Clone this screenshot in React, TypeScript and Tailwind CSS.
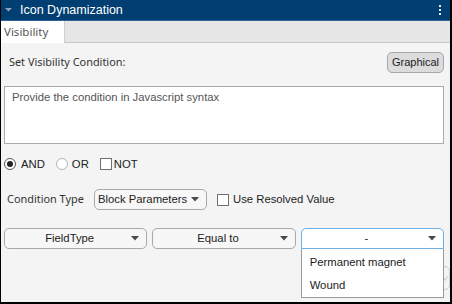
import React from 'react';

const arial = { fontFamily: '"Liberation Sans", Arial, sans-serif' };
const segoe = { fontFamily: '"Noto Sans", "Open Sans", sans-serif' };

const Caret = ({ color = '#4a4a4a' }: { color?: string }) => (
  <svg width="8" height="5" viewBox="0 0 8 5" className="shrink-0">
    <polygon points="0,0 8,0 4,4.5" fill={color} />
  </svg>
);

type DropdownProps = {
  label: string;
  center?: boolean;
  focused?: boolean;
  className?: string;
};

const Dropdown: React.FC<DropdownProps> = ({ label, center, focused, className = '' }) => (
  <div
    className={`flex items-center h-[21px] pl-[3px] pr-[7px] border text-[11.3px] text-[#222] ${
      focused
        ? 'bg-white border-[#6aaee6] rounded-t-[5px]'
        : 'bg-[#f7f7f7] border-[#a9a9a9] rounded-[5px]'
    } ${className}`}
    style={arial}
  >
    <span className={`flex-1 truncate ${center ? 'text-center' : ''}`}>{label}</span>
    <Caret />
  </div>
);

const Radio = ({ checked }: { checked?: boolean }) => (
  <span
    className={`block w-[12px] h-[12px] rounded-full border bg-white flex items-center justify-center ${
      checked ? 'border-[#555]' : 'border-[#b5b5b5]'
    }`}
  >
    {checked && <span className="w-[6px] h-[6px] rounded-full bg-[#222]" />}
  </span>
);

const Checkbox = () => <span className="block w-[12px] h-[12px] border border-[#707070] bg-white" />;

export default function App() {
  return (
    <div className="w-[452px] h-[304px] flex flex-col bg-[#f4f4f4] border-l border-r-2 border-b-2 border-black overflow-hidden">
      {/* title bar */}
      <div className="h-[21px] shrink-0 flex items-center bg-[#013f72] border-b border-[#2a6499] pl-[4px] pr-[9px]">
        <svg width="7" height="4" viewBox="0 0 7 4">
          <polygon points="0,0 7,0 3.5,3.5" fill="#8fa4ba" />
        </svg>
        <span className="ml-[8px] text-white text-[12.5px]" style={arial}>
          Icon Dynamization
        </span>
        <div className="ml-auto flex flex-col gap-[2px]">
          <span className="w-[2px] h-[2px] bg-[#e6ecf2]" />
          <span className="w-[2px] h-[2px] bg-[#e6ecf2]" />
          <span className="w-[2px] h-[2px] bg-[#e6ecf2]" />
        </div>
      </div>

      {/* tabs */}
      <div className="h-[22px] shrink-0 flex bg-[#e6e6e6] border-b border-[#c6c6c6]">
        <div className="w-[64px] h-[22px] bg-white border-r border-[#cfcfcf] pl-[3px] flex items-center text-[11.5px] text-[#555]" style={segoe}>
          Visibility
        </div>
      </div>

      {/* body */}
      <div className="flex flex-col pl-[3px] pr-[6px]">
        <div className="mt-[9px] h-[21px] flex items-center">
          <span className="ml-[5px] text-[10.9px] text-[#333]" style={segoe}>
            Set Visibility Condition:
          </span>
          <button
            className="ml-auto h-[21px] w-[57px] rounded-[5px] bg-[#dcdcdc] border border-[#a8a8a8] text-[11px] text-[#222]"
            style={arial}
          >
            Graphical
          </button>
        </div>

        <div className="mt-[13px] h-[58px] bg-white border border-[#aaaaaa] px-[7px] pt-[2px] text-[11.3px] text-[#555]" style={arial}>
          Provide the condition in Javascript syntax
        </div>

        <div className="mt-[10px] h-[20px] flex items-center text-[11.3px] text-[#222]" style={arial}>
          <Radio checked />
          <span className="ml-[5px]">AND</span>
          <span className="ml-[11px]"><Radio /></span>
          <span className="ml-[4px]">OR</span>
          <span className="ml-[11px]"><Checkbox /></span>
          <span className="ml-[2px]">NOT</span>
        </div>

        <div className="mt-[15px] h-[21px] flex items-center">
          <span className="ml-[3px] w-[87px] text-[10.9px] text-[#333]" style={segoe}>
            Condition Type
          </span>
          <Dropdown label="Block Parameters" className="w-[113px]" />
          <span className="ml-[10px]"><Checkbox /></span>
          <span className="ml-[4px] text-[11.3px] text-[#222]" style={arial}>
            Use Resolved Value
          </span>
        </div>

        <div className="mt-[18px] grid grid-cols-3 gap-[5px] w-[440px]">
          <Dropdown label="FieldType" center />
          <Dropdown label="Equal to" center />
          <div className="relative">
            <Dropdown label="-" center focused />
            <div className="absolute left-0 right-0 top-full z-10 h-[49px] bg-white border border-t-0 border-[#9a9a9a] pl-[8px] text-[11.3px] text-[#222] flex flex-col" style={arial}>
              <span className="h-[24px] flex items-center pt-[2px]">Permanent magnet</span>
              <span className="h-[24px] flex items-center">Wound</span>
            </div>
          </div>
        </div>

        <div className="mt-[17px] h-[24px] flex justify-end mr-[-6px]">
          <div className="w-[22px] h-[24px] border border-[#cdcdcd] rounded-[5px] flex items-center pl-[14px]">
            <svg width="5" height="5" viewBox="0 0 5 5">
              <polyline points="0,0 2.5,4.5 5,0" fill="none" stroke="#c8c8c8" strokeWidth="1" />
            </svg>
          </div>
        </div>
      </div>
    </div>
  );
}
